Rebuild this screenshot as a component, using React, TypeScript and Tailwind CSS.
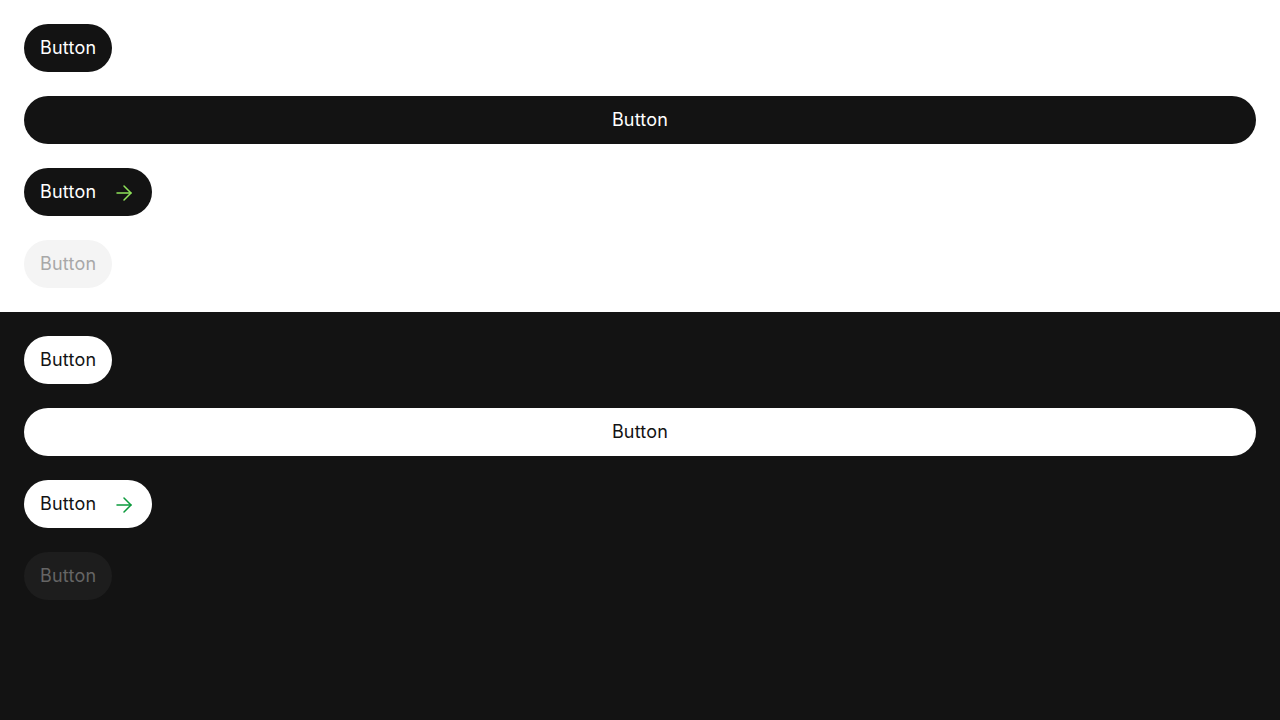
import { ArrowRight } from "lucide-react";

type Variant = "light" | "dark";

const base =
  "h-12 rounded-full px-4 text-[18px] leading-none tracking-[0.2px] flex items-center justify-center";

const ButtonSet = ({ variant }: { variant: Variant }) => {
  const solid =
    variant === "light"
      ? "bg-[#131313] text-white"
      : "bg-white text-[#131313]";
  const disabled =
    variant === "light"
      ? "bg-[#f4f4f4] text-[#a8a8a8]"
      : "bg-[#1d1d1d] text-[#656565]";
  const arrow = variant === "light" ? "text-[#8fe35a]" : "text-[#0b9a3c]";

  return (
    <div
      className={`flex flex-col items-start gap-6 p-6 ${
        variant === "light" ? "bg-white" : "bg-[#131313]"
      }`}
    >
      <button className={`${base} ${solid}`}>Button</button>
      <button className={`${base} ${solid} w-full`}>Button</button>
      <button className={`${base} ${solid} gap-4`}>
        Button
        <ArrowRight size={24} strokeWidth={1.5} className={`${arrow} mt-0.5`} />
      </button>
      <button className={`${base} ${disabled}`} disabled>
        Button
      </button>
    </div>
  );
};

export default function App() {
  return (
    <div className="min-h-screen bg-[#131313] font-['Inter',sans-serif]">
      <ButtonSet variant="light" />
      <ButtonSet variant="dark" />
    </div>
  );
}
